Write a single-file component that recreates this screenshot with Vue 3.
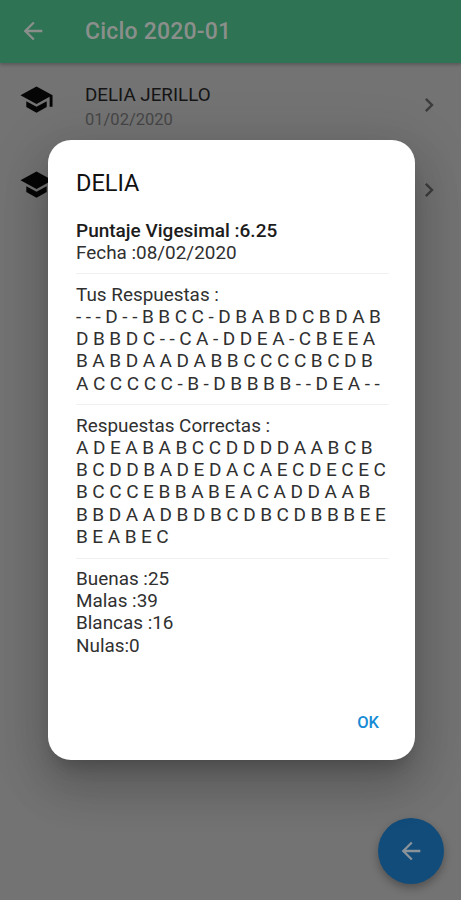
<script setup>
const students = [
  { id: 1, name: 'DELIA JERILLO', date: '01/02/2020' },
  { id: 2, name: '', date: '' },
]
const answers = [
  '- - - D - - B B C C - D B A B D C B D A B',
  'D B B D C - - C A - D D E A - C B E E A',
  'B A B D A A D A B B C C C C B C D B',
  'A C C C C C - B - D B B B B - - D E A - -',
]
const correct = [
  'A D E A B A B C C D D D D A A B C B',
  'B C D D B A D E D A C A E C D E C E C',
  'B C C C E B B A B E A C A D D A A B',
  'B B D A A D B D B C D B C D B B B E E',
  'B E A B E C',
]
</script>

<template>
  <div class="screen">
    <header class="bar">
      <svg class="back" viewBox="0 0 24 24"><path d="M20 11H7.83l5.59-5.59L12 4l-8 8 8 8 1.41-1.41L7.83 13H20v-2z" /></svg>
      <h1>Ciclo 2020-01</h1>
    </header>
    <main class="list">
      <div v-for="s in students" :key="s.id" class="row">
        <svg class="cap" viewBox="0 0 24 24"><path d="M5 13.18v4L12 21l7-3.82v-4L12 17l-7-3.82zM12 3L1 9l11 6 9-4.91V17h2V9L12 3z" /></svg>
        <div class="who">
          <div class="name">{{ s.name }}</div>
          <div class="date">{{ s.date }}</div>
        </div>
        <svg class="chev" viewBox="0 0 24 24"><path d="M10 6L8.59 7.41 13.17 12l-4.58 4.59L10 18l6-6z" /></svg>
      </div>
    </main>
    <button class="fab">
      <svg viewBox="0 0 24 24"><path d="M20 11H7.83l5.59-5.59L12 4l-8 8 8 8 1.41-1.41L7.83 13H20v-2z" /></svg>
    </button>
    <div class="overlay">
      <section class="dialog">
        <h2>DELIA</h2>
        <div class="body">
          <p class="score">Puntaje Vigesimal :6.25</p>
          <p>Fecha :08/02/2020</p>
          <hr />
          <p>Tus Respuestas :</p>
          <p v-for="(l, i) in answers" :key="i" class="keys">{{ l }}</p>
          <hr />
          <p>Respuestas Correctas :</p>
          <p v-for="(l, i) in correct" :key="i" class="keys">{{ l }}</p>
          <hr />
          <p>Buenas :25</p>
          <p>Malas :39</p>
          <p>Blancas :16</p>
          <p>Nulas:0</p>
        </div>
        <div class="actions"><button class="ok">OK</button></div>
      </section>
    </div>
  </div>
</template>

<style>
body { margin: 0; }
</style>

<style scoped>
* { box-sizing: border-box; }
.screen {
  position: relative;
  display: flex;
  flex-direction: column;
  height: 900px;
  overflow: hidden;
  background: #737373;
  font-family: Roboto, "Liberation Sans", sans-serif;
}
h1, h2, p { margin: 0; font-weight: 400; }
button { border: 0; padding: 0; font-family: inherit; background: none; }
svg { display: block; flex: none; }
.bar {
  display: flex;
  align-items: center;
  height: 63px;
  padding-left: 19px;
  background: #2e7353;
  box-shadow: 0 2px 3px rgba(0, 0, 0, 0.22);
}
.back { width: 28px; height: 28px; margin-top: -2px; fill: #8b8f8c; }
.bar h1 {
  margin-left: 38px;
  font-size: 23px;
  font-weight: 500;
  letter-spacing: 0.2px;
  color: #8b8f8c;
}
.list { padding-top: 1px; }
.row { display: flex; height: 85px; padding: 18px 18px 0 19px; }
.cap { width: 35px; height: 35px; fill: #060606; }
.who { flex: 1; margin-left: 31px; padding-top: 1px; }
.name { font-size: 18.8px; line-height: 25px; color: #151515; }
.date { font-size: 16.5px; line-height: 24px; color: #464646; }
.chev { width: 28px; height: 28px; margin-top: 9px; fill: #3c3c3c; }
.fab {
  position: absolute;
  right: 17px;
  bottom: 16px;
  display: grid;
  place-items: center;
  width: 66px;
  height: 66px;
  border-radius: 50%;
  background: #114c7a;
  box-shadow: 0 4px 8px rgba(0, 0, 0, 0.3);
}
.fab svg { width: 28px; height: 28px; fill: #8a929a; }
.overlay {
  position: absolute;
  inset: 0;
  display: flex;
  align-items: center;
  justify-content: center;
  padding-left: 2px;
}
.dialog {
  display: flex;
  flex-direction: column;
  width: 367px;
  height: 620px;
  padding: 28px 26px 19px 28px;
  border-radius: 23px;
  background: #fff;
  box-shadow: 0 13px 18px -8px rgba(0, 0, 0, 0.2), 0 28px 45px 3px rgba(0, 0, 0, 0.14), 0 10px 54px 9px rgba(0, 0, 0, 0.12);
}
.dialog h2 { font-size: 23.5px; line-height: 30px; color: #111; }
.body { margin-top: 21.5px; font-size: 18.9px; line-height: 22.3px; color: #303030; }
.body p { white-space: nowrap; }
.body .score { font-size: 19px; font-weight: 500; color: #1c1c1c; }
.body .keys { font-size: 19px; word-spacing: -0.18px; }
hr { height: 1px; margin: 9.3px 0 9.2px; border: 0; background: #f0f0f0; }
.actions { display: flex; justify-content: flex-end; margin-top: auto; }
.ok { padding: 8px 10px; font-size: 16.5px; line-height: 20px; font-weight: 500; color: #168bd5; }
</style>
